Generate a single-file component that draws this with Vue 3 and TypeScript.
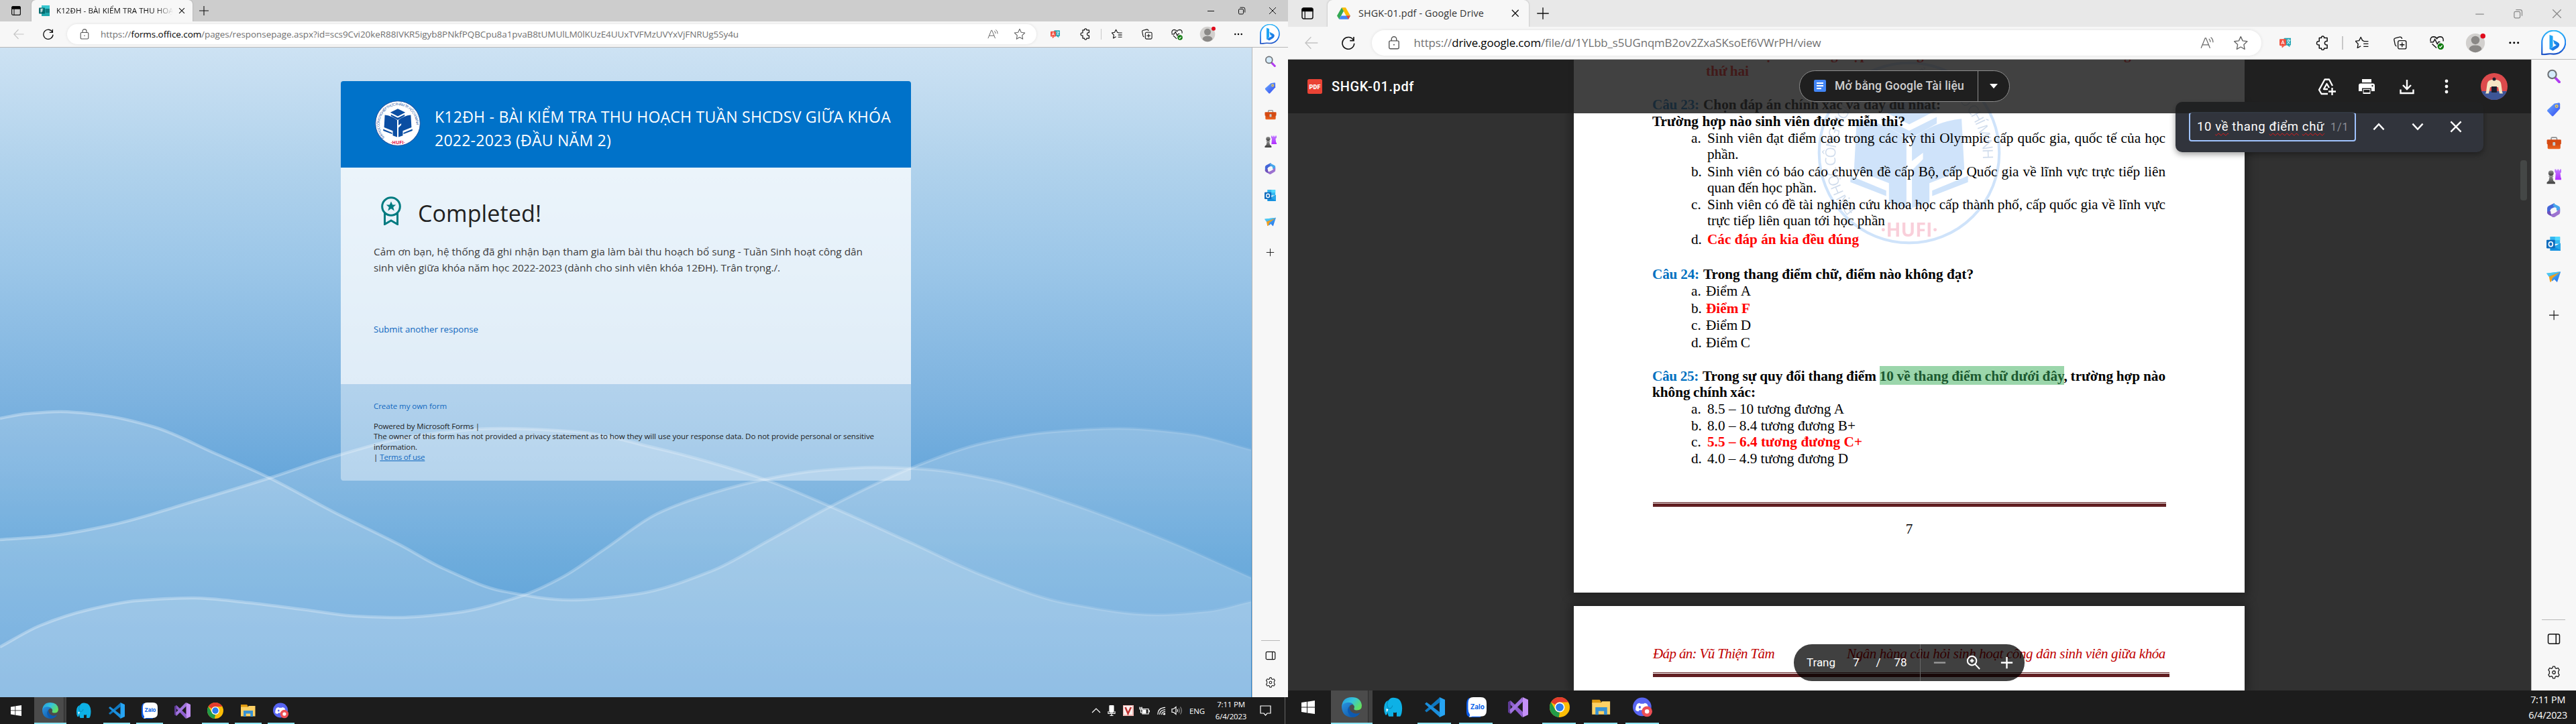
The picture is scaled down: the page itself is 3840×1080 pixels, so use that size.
<script setup lang="ts">
import type { Directive } from 'vue'

// Spreads a run of text over a given width in device pixels.
const spread = (el: HTMLElement, width: number, words: boolean) => {
  const zoom = (el as HTMLElement & { currentCSSZoom?: number }).currentCSSZoom ?? 1
  const text = el.textContent ?? ''
  const count = words ? (text.match(/ /g) ?? []).length : text.length
  if (!count || !width) return
  const gap = (width - el.getBoundingClientRect().width) / count / zoom
  if (words) el.style.wordSpacing = `${gap}px`
  else el.style.letterSpacing = `${gap}px`
}
const vFit: Directive<HTMLElement, number> = {
  mounted: (el, b) => spread(el, b.value, !!b.modifiers.words),
}

interface Win {
  id: 'forms' | 'drive'
  title: string
  titleWidth: number
  icon: string
  scheme: string
  host: string
  path: string
  urlWidth: number
}
const wins: Win[] = [
  {
    id: 'forms', title: 'K12ĐH - BÀI KIỂM TRA THU HOẠC', titleWidth: 182, icon: 'i-forms',
    scheme: 'https://', host: 'forms.office.com',
    path: '/pages/responsepage.aspx?id=scs9Cvi20keR88IVKR5igyb8PNkfPQBCpu8a1pvaB8tUMUlLM0lKUzE4UUxTVFMzUVYxVjFNRUg5Sy4u',
    urlWidth: 951,
  },
  {
    id: 'drive', title: 'SHGK-01.pdf - Google Drive', titleWidth: 187, icon: 'i-drive',
    scheme: 'https://', host: 'drive.google.com',
    path: '/file/d/1YLbb_s5UGnqmB2ov2ZxaSKsoEf6VWrPH/view', urlWidth: 607,
  },
]
const sideIcons = ['s-search', 's-tag', 's-box', 's-chess', 's-365', 's-outlook', 's-send']
const apps = [
  { icon: 't-edge', state: 'active' }, { icon: 't-mamp', state: '' }, { icon: 't-code', state: 'open' },
  { icon: 't-zalo', state: 'open' }, { icon: 't-vs', state: '' }, { icon: 't-chrome', state: 'open' },
  { icon: 't-files', state: 'open' }, { icon: 't-discord', state: 'open' },
]

// Smooth curve through the points that never overshoots a crest or a trough.
type Pt = [number, number]
const curve = (p: Pt[]): string => {
  const slope = (i: number) => (p[i + 1][1] - p[i][1]) / (p[i + 1][0] - p[i][0])
  const tan = p.map((_, i) => {
    if (i === 0) return slope(0)
    if (i === p.length - 1) return slope(i - 1)
    const a = slope(i - 1)
    const b = slope(i)
    return a * b <= 0 ? 0 : (2 * a * b) / (a + b)
  })
  let d = `M${p[0][0]} ${p[0][1]}`
  for (let i = 0; i < p.length - 1; i++) {
    const h = (p[i + 1][0] - p[i][0]) / 3
    d += `C${p[i][0] + h} ${p[i][1] + tan[i] * h} ${p[i + 1][0] - h} ${p[i + 1][1] - tan[i + 1] * h} ${p[i + 1][0]} ${p[i + 1][1]}`
  }
  return d
}
const waves = [
  curve([[0, 624], [40, 617], [90, 614], [150, 619], [230, 637], [320, 676], [402, 713], [500, 765], [595, 812], [661, 848], [750, 882], [851, 895], [950, 886], [1060, 852], [1150, 804], [1239, 755], [1359, 698], [1470, 660], [1570, 644], [1668, 639], [1770, 647], [1866, 671]]),
  curve([[0, 805], [70, 800], [171, 782], [285, 749], [402, 713], [508, 678], [620, 650], [747, 639], [860, 644], [980, 669], [1060, 690], [1145, 717], [1239, 756], [1359, 810], [1469, 860], [1590, 900], [1724, 917], [1800, 912], [1866, 897]]),
  curve([[0, 965], [60, 933], [130, 910], [205, 896], [288, 892], [370, 899], [465, 911], [530, 919], [594, 921], [680, 914], [777, 889], [840, 860], [900, 820], [980, 766], [1060, 736], [1145, 714], [1220, 702], [1304, 697], [1380, 700], [1480, 716], [1592, 750], [1739, 806], [1866, 862]]),
]

interface Row { h: number; mark?: string; head?: string; text: string; w: number; red?: boolean; bold?: boolean; near?: boolean; flat?: boolean }
const before: Row[] = [
  { h: 50, mark: ' ', text: 'thứ hai', w: 64, red: true, near: true },
  { h: 25, head: 'Câu 23:', text: 'Chọn đáp án chính xác và đầy đủ nhất:', w: 354, bold: true },
  { h: 25, text: 'Trường hợp nào sinh viên được miễn thi?', w: 377, bold: true, flat: true },
  { h: 24.5, mark: 'a.', text: 'Sinh viên đạt điểm cao trong các kỳ thi Olympic cấp quốc gia, quốc tế của học', w: 683 },
  { h: 25.5, mark: ' ', text: 'phần.', w: 0 },
  { h: 24.5, mark: 'b.', text: 'Sinh viên có báo cáo chuyên đề cấp Bộ, cấp Quốc gia về lĩnh vực trực tiếp liên', w: 683 },
  { h: 25, mark: ' ', text: 'quan đến học phần.', w: 163 },
  { h: 24, mark: 'c.', text: 'Sinh viên có đề tài nghiên cứu khoa học cấp thành phố, cấp quốc gia về lĩnh vực', w: 683 },
  { h: 28, mark: ' ', text: 'trực tiếp liên quan tới học phần', w: 265 },
  { h: 52, mark: 'd.', text: 'Các đáp án kia đều đúng', w: 226, red: true },
  { h: 25, head: 'Câu 24:', text: 'Trong thang điểm chữ, điểm nào không đạt?', w: 403, bold: true },
  { h: 26, mark: 'a.', text: 'Điểm A', w: 67, near: true },
  { h: 25, mark: 'b.', text: 'Điểm F', w: 66, red: true, near: true },
  { h: 26, mark: 'c.', text: 'Điểm D', w: 67, near: true },
  { h: 50, mark: 'd.', text: 'Điểm C', w: 66, near: true },
]
const after: Row[] = [
  { h: 25, text: 'không chính xác:', w: 154, bold: true, flat: true },
  { h: 24.5, mark: 'a.', text: '8.5 – 10 tương đương A', w: 204 },
  { h: 24.5, mark: 'b.', text: '8.0 – 8.4 tương đương B+', w: 221 },
  { h: 24.5, mark: 'c.', text: '5.5 – 6.4 tương đương C+', w: 231, red: true },
  { h: 24, mark: 'd.', text: '4.0 – 4.9 tương đương D', w: 210 },
]
</script>

<template>
  <div class="desk">
    <svg class="defs" width="0" height="0" aria-hidden="true">
      <defs>
        <linearGradient id="g-bing" x1="0" y1="0" x2="0" y2="1"><stop offset="0" stop-color="#2fb6f7" /><stop offset=".6" stop-color="#1b7df0" /><stop offset="1" stop-color="#1a4fc4" /></linearGradient>
        <linearGradient id="g-b" x1="0" y1="0" x2="1" y2="1"><stop offset="0" stop-color="#1ba8f5" /><stop offset="1" stop-color="#1c62dc" /></linearGradient>
        <linearGradient id="g-tag" x1="0" y1="0" x2="1" y2="1"><stop offset="0" stop-color="#6cb0ff" /><stop offset="1" stop-color="#3448f0" /></linearGradient>
        <linearGradient id="g-box" x1="0" y1="0" x2="0" y2="1"><stop offset="0" stop-color="#c8400f" /><stop offset="1" stop-color="#ee6620" /></linearGradient>
        <linearGradient id="g-pawn" x1="0" y1="0" x2="0" y2="1"><stop offset="0" stop-color="#969696" /><stop offset="1" stop-color="#3c3c3c" /></linearGradient>
        <linearGradient id="g-rook" x1="0" y1="0" x2="0" y2="1"><stop offset="0" stop-color="#c07cff" /><stop offset="1" stop-color="#b02cff" /></linearGradient>
        <linearGradient id="g-edge" x1="0" y1="0" x2="1" y2=".6"><stop offset="0" stop-color="#2196e0" /><stop offset=".5" stop-color="#35c4dc" /><stop offset="1" stop-color="#62e060" /></linearGradient>
        <linearGradient id="g-edge2" x1="0" y1="0" x2="1" y2="1"><stop offset="0" stop-color="#2a93e0" /><stop offset="1" stop-color="#0a4c9c" /></linearGradient>
        <linearGradient id="g-send" x1="0" y1="0" x2="1" y2="1"><stop offset="0" stop-color="#5bd0f8" /><stop offset="1" stop-color="#1c66e8" /></linearGradient>
      </defs>

      <symbol id="i-work" viewBox="0 0 16 16"><rect x="1.6" y="1.6" width="12.8" height="12.8" rx="2" fill="none" stroke="#111" stroke-width="1.2" /><path d="M1.6 5.2V3.4Q1.6 1.6 3.4 1.6H12.6Q14.4 1.6 14.4 3.4V5.2ZM5 5v9.4" stroke="#111" stroke-width="1" /></symbol>
      <symbol id="i-forms" viewBox="0 0 16 16"><rect x="4" width="12" height="16" rx="1" fill="#1a9ba1" /><path d="M4 0h11a1 1 0 0 1 1 1v4H4z" fill="#37c6d0" /><path d="M10 5h6v6h-6z" fill="#0f7c82" /><path d="M10 11h6v4a1 1 0 0 1-1 1H4v-4z" fill="#1fa7ad" /><rect y="3.5" width="9" height="9" rx="1" fill="#036c70" /><path d="M3.2 10.6V5.6H6.2M3.2 8.1h2.6" stroke="#fff" stroke-width="1.2" fill="none" /></symbol>
      <symbol id="i-drive" viewBox="0 0 16 16"><path d="M5.6 1h4.8L16 10.8h-5z" fill="#fbbc04" /><path d="M5.6 1 8 5.2 2.6 15 0 10.8z" fill="#34a853" /><path d="M5 10.8h11L13.6 15H2.6z" fill="#4285f4" /><path d="M11 10.8h5L13.6 15z" fill="#ea4335" /></symbol>
      <symbol id="i-x" viewBox="0 0 16 16"><path d="m3.5 3.5 9 9m0-9-9 9" stroke="currentColor" stroke-width="1.2" /></symbol>
      <symbol id="i-plus" viewBox="0 0 16 16"><path d="M8 1v14M1 8h14" stroke="currentColor" stroke-width="1.1" /></symbol>
      <symbol id="i-min" viewBox="0 0 12 12"><path d="M1 6.5h10" stroke="currentColor" stroke-width="1" /></symbol>
      <symbol id="i-restore" viewBox="0 0 12 12" fill="none" stroke="currentColor"><rect x="1.5" y="3.5" width="7" height="7.5" rx="1.4" /><path d="M3.5 1.2H8.6Q10.8 1.2 10.8 3.4V8.6" /></symbol>
      <symbol id="i-close" viewBox="0 0 12 12"><path d="m1 1 10 10m0-10L1 11" stroke="currentColor" /></symbol>
      <symbol id="i-back" viewBox="0 0 16 16" fill="none"><path d="M15.5 8H1m6.5-7L.8 8l6.700 7" stroke="#c4c4c4" stroke-width="1.1" /></symbol>
      <symbol id="i-reload" viewBox="0 0 16 16" fill="none"><path d="M14.200 5A7.100 7.100 0 1 0 15 8.600M14.400.8v4.500h-4.600" stroke="#111" stroke-width="1.300" /></symbol>
      <symbol id="i-lock" viewBox="0 0 16 16" fill="none" stroke="#555" stroke-width="1.100"><rect x="2.200" y="5.500" width="11.600" height="9.500" rx="1.600" /><path d="M5 5.500V3.600a3 3 0 0 1 6 0v1.900" /><circle cx="8" cy="10.200" r=".8" fill="#555" stroke="none" /></symbol>
      <symbol id="i-read" viewBox="0 0 18 18" fill="none" stroke="#666" stroke-width="1.100"><path d="M1 16 6.500 2.500h1L13 16M3 11.500h8M11.500 3.500q2 1.600 1.900 4.400M14 1.500q3.200 2.400 3 6.800" /></symbol>
      <symbol id="i-star" viewBox="0 0 18 18" fill="none" stroke="#666" stroke-width="1.100" stroke-linejoin="round"><path d="m9 1.300 2.300 5 5.400.7-4 3.800 1 5.500L9 13.600l-4.700 2.700 1-5.500-4-3.800 5.400-.7z" /></symbol>
      <symbol id="i-trans" viewBox="0 0 16 16"><rect x="6" y="1.500" width="10" height="10" rx="1" fill="#27a6b4" /><path d="M10 11h4v3z" fill="#27a6b4" /><rect y="3" width="9" height="9" rx="1" fill="#f2513f" /><path d="M3 12h4l-3.500 3z" fill="#f2513f" /><path d="M2.500 10 4.500 5l2 5M3.200 8.500h2.600M10 4.500h5M12.500 3.200v1.300M10.200 9.500q3.300-1.600 3.800-5M10.800 5.500q1 2.800 3.600 4" stroke="#fff" stroke-width=".9" fill="none" /></symbol>
      <symbol id="i-puzzle" viewBox="0 0 18 18" fill="none" stroke="#111" stroke-width="1.200" stroke-linejoin="round"><path d="M5 2.800h2.700q-.4-2 1.500-2t1.600 2h3.700V6.700h-1.300q-1.700.4-1.700 2.200t1.700 2.200h1.300v4h-3.600q0 2.100-1.700 2.100t-1.600-2.100H5v-4q-3 .4-3-2t3-2.200z" /></symbol>
      <symbol id="i-favs" viewBox="0 0 18 18" fill="none" stroke="#111" stroke-width="1.200" stroke-linejoin="round"><path d="M11.500 6.300 9.700 6 7.400 1.300 5.100 6l-4.800.7 3.500 3.600-.9 5.400 4.500-2.400" /><path d="M11 6.800h6.500M11 10.300h6.500M11 13.800h6.500" /></symbol>
      <symbol id="i-coll" viewBox="0 0 18 18" fill="none" stroke="#111" stroke-width="1.200"><rect x="6" y="6" width="11" height="11" rx="2" /><path d="M4 13.500Q2.400 13 2 11L.8 5Q.4 3 2.400 2.500L8.500 1q2.200-.3 2.900 2.500M11.500 8.300v6.400M8.300 11.500h6.400" /></symbol>
      <symbol id="i-heart" viewBox="0 0 18 18" fill="none" stroke="#111" stroke-width="1.200"><path d="M1 7.200Q.3 1.700 4.700 1.500 7.700 1.500 9 4q1.300-2.500 4.300-2.500Q17.700 1.700 17 7.200M.5 8.300h4l2-3.600 3 6 1.600-2.700h2M3 10.500l5.500 5.200" /><circle cx="13.800" cy="13.800" r="4" fill="#0f7b0f" stroke="none" /><path d="m12 13.900 1.300 1.300 2.400-2.700" stroke="#fff" /></symbol>
      <symbol id="i-user" viewBox="0 0 24 24"><circle cx="12" cy="12" r="11.300" fill="#d2d0ce" /><circle cx="12" cy="8.700" r="5" fill="#8a8886" /><path d="M4.500 19.500Q5 14.800 12 14.800t7.500 4.700A11.300 11.300 0 0 1 12 23.300a11.300 11.300 0 0 1-7.500-3.800" fill="#8a8886" /><circle cx="21" cy="3.800" r="3" fill="#e00b1c" /></symbol>
      <symbol id="i-dots" viewBox="0 0 16 16"><circle cx="2.600" cy="8" r="1.400" /><circle cx="8" cy="8" r="1.400" /><circle cx="13.400" cy="8" r="1.400" /></symbol>
      <symbol id="i-bing" viewBox="0 0 30 30"><path d="M1 29V15A14 14 0 1 1 15 28.500Q10 28 7.500 28.500T1 29Z" fill="#fdfeff" stroke="url(#g-bing)" stroke-width="1.700" stroke-linejoin="round" /><path d="m10 5.500 4 1.500v12.500l-4 3.200z" fill="#20a4f4" /><path d="m14.300 11.500 5.700 3q3 1.900 1 5-.8 1.200-2.200 2L14 24.500l-4-2.200 8.300-4.500-2.500-1.400z" fill="url(#g-b)" /></symbol>

      <symbol id="s-search" viewBox="0 0 20 20"><path d="m12.500 12.500 5.500 5.700" stroke="#b13cf0" stroke-width="3.600" stroke-linecap="round" /><circle cx="8" cy="7.500" r="5.800" fill="#d5ecfb" stroke="#6f7276" stroke-width="2" /></symbol>
      <symbol id="s-tag" viewBox="0 0 20 20"><path d="M11 1.500 17.500.3Q19 .3 19 2v6.500L9.800 18.700q-1.300 1.200-2.500 0L1.500 12.500q-1-1.200 0-2.400z" fill="url(#g-tag)" /><circle cx="14.300" cy="5.200" r="1.600" fill="#4a63d8" stroke="#f4cd4c" stroke-width="1.500" /></symbol>
      <symbol id="s-box" viewBox="0 0 20 20"><path d="M6 6V3.600Q6 2 7.500 2h5Q14 2 14 3.600V6" fill="none" stroke="#8e8e8e" stroke-width="1.500" /><rect x="1" y="9" width="18" height="9" rx="1.500" fill="url(#g-box)" /><rect y="5" width="20" height="6.500" rx="1.200" fill="#d54a12" /><rect x="8.200" y="8.500" width="3.600" height="5" rx=".8" fill="#c4cdd0" /></symbol>
      <symbol id="s-chess" viewBox="0 0 20 20"><circle cx="6" cy="5.600" r="3.500" fill="url(#g-pawn)" /><path d="M3 9h6v1.500H8l1 5 2.500 2.200V20H.5v-2.300L3 15.500l1-5H3z" fill="url(#g-pawn)" /><path d="M11 .5h2v1.600h1.400V.5h2v1.600h1.400V.5H20V4l-1.700 1.500.7 6 1 1v2h-8.500l.7-9L11 4z" fill="url(#g-rook)" /></symbol>
      <symbol id="s-365" viewBox="0 0 20 20"><path d="M11 0 3 4Q1 5.300 1 7v7l4 2.500V10L12 5.500z" fill="#4466d8" /><path d="m10 .5 7.500 4Q19 5.300 19 7v5l-5-2V7L9 4z" fill="#47a7ec" /><path d="M19 8v5.500q0 1.400-1.300 2.200L11 19.800q-1.400.6-2.600-.2L4 16.800q1.500.2 3-.7l7-4z" fill="#9c72d0" /><path d="m1 12 5-1v3q.6 2 2.500 2.200L5 17.500q-4-2-4-4z" fill="#6f52bd" /><path d="m10 6 4 2.300v4L10 14.500l-4-2.300V8.300z" fill="#f7f7f7" /></symbol>
      <symbol id="s-outlook" viewBox="0 0 20 20"><path d="M5 0h13q1 0 1 1v9H5z" fill="#35b8f1" /><path d="M12 0h7v5h-7z" fill="#50d9ff" /><path d="m5 10 7 3 8-4v10q0 1-1 1H6q-1 0-1-1z" fill="#1490df" /><path d="m11 14 9-5v10z" fill="#28a8ea" /><rect y="4.500" width="12" height="12" rx="1.200" fill="#0f6cbd" /><ellipse cx="6" cy="10.500" rx="2.800" ry="3.200" fill="none" stroke="#fff" stroke-width="1.600" /></symbol>
      <symbol id="s-send" viewBox="0 0 20 20"><path d="M0 4.500 20 2l-5 15-4-4-3 2.500z" fill="url(#g-send)" /><path d="M3.500 9 19 2.800 8.500 11l-2 5.500H5z" fill="#f0a020" /><path d="M0 4.500 20 2 4 8z" fill="#4cc8f0" /></symbol>
      <symbol id="s-panel" viewBox="0 0 16 16" fill="none" stroke="#111" stroke-width="1.200"><rect x="1.200" y="2.300" width="13.600" height="11.400" rx="1.800" /><path d="M10.600 2.300v11.400" /></symbol>
      <symbol id="s-gear" viewBox="0 0 18 18" fill="none" stroke="#222" stroke-width="1.200" stroke-linejoin="round"><path d="M7.200 3.100 7.700 1h2.600l.5 2.100 1.500.8 2.300-.8 1.700 2.700-1.300 1.700v3l1.300 1.700-1.700 2.700-2.300-.8-1.500.8-.5 2.100H7.700l-.5-2.100-1.500-.8-2.300.8-1.700-2.700L3 10.500v-3L1.700 5.800l1.700-2.700 2.300.8z" /><circle cx="9" cy="9" r="2" /></symbol>

      <symbol id="t-start" viewBox="0 0 16 16" fill="#fff"><path d="M0 2.400 6.400 1.400V7.500H0zM7.200 1.300 16 0V7.500H7.200zM0 8.300h6.400v6.200L0 13.600zM7.200 8.300H16V16l-8.800-1.300z" /></symbol>
      <symbol id="t-edge" viewBox="0 0 24 24"><path d="M0 11.500Q1 0 12 0t12 10q0 5.500-6 5.600-4.500-.2-3-2.800.8-1.600-.6-3.300Q12.500 7.600 8 7.500 2.500 7.700 0 11.500" fill="url(#g-edge)" /><path d="M0 12q.3-5 6.500-5.700Q12 6 14.200 9 9.500 8.200 9 12.500q0 6.500 7 7.500 3 .3 6-1.500Q18.500 24 12 24 1 23.500 0 12" fill="url(#g-edge2)" /><path d="M9 11q-3.500 4-.5 9 2 3.500 6 3.700Q19 23 22 18.500 18 20.500 14 19q-5-2.500-5-8" fill="#0d5ab0" /></symbol>
      <symbol id="t-mamp" viewBox="0 0 24 24"><path d="M1 12Q1.500 5 6 4q3-4.500 8-3.200Q22 1.500 22.500 13q0 7-2.300 10H16v-5q-2 1-4 .2V23H6.500q-1.500-3-1-6-1 5.500-3 4Q.7 18 1 12" fill="#0db1e6" /><path d="M6 4q-3 5 0 9 4 1.500 5-3" fill="none" stroke="#0689b8" stroke-width=".9" /><path d="M3.500 13.500 6 14.500 4 18" fill="#fff" /></symbol>
      <symbol id="t-code" viewBox="0 0 24 24"><path d="M17.500 0 24 3v18l-6.500 3z" fill="#27a4f2" /><path d="m0 16 2 2L18 6V0z" fill="#0f78c0" /><path d="M0 8l2-2 16 12v6z" fill="#1b8fdd" /></symbol>
      <symbol id="t-zalo" viewBox="0 0 24 24"><path d="M6 1H3Q0 3 0 8v10q0 6 6 6h11z" fill="#0a5be8" /><path d="M8 0h9q7 0 7 7v9q0 7-7 7H7q-2 1-4 .5 1.500-1.500 1-3Q2 18 2 14V7q0-7 6-7" fill="#fff" /><text x="13" y="14.300" text-anchor="middle" font-family="Inter, sans-serif" font-size="8" font-weight="700" fill="#0b63e8" textLength="17">Zalo</text></symbol>
      <symbol id="t-vs" viewBox="0 0 24 24"><path d="m0 6 3-2 15 14-1 6z" fill="#8f5fd0" /><path d="M0 6l3-2v16l-3-2z" fill="#5e3b95" /><path d="m3 20 15-15-1-5L2 15z" fill="#a074de" /><path d="M17.500 0 24 3v18l-6.500 3z" fill="#c490f7" /></symbol>
      <symbol id="t-chrome" viewBox="0 0 24 24"><circle cx="12" cy="12" r="12" fill="#fbbd06" /><path d="M1.600 6A12 12 0 0 1 22.400 6H12a6 6 0 0 0-5.200 3z" fill="#e33b2e" /><path d="M1.600 6 6.800 15A6 6 0 0 0 12 18l-1 6A12 12 0 0 1 1.600 6" fill="#229a48" /><path d="m17.200 15-5.200 9h-1l3.400-6.600z" fill="#fbbd06" /><circle cx="12" cy="12" r="6" fill="#fff" /><circle cx="12" cy="12" r="4.700" fill="#2b7bec" /></symbol>
      <symbol id="t-files" viewBox="0 0 24 24"><path d="M1 3h9l1.500 2v3H1z" fill="#e09a10" /><path d="M1 6.500h10.500L13 5h9.500v15.500H1z" fill="#fdd165" /><path d="M5 21v-9h14v9h-3.700v-4.500H8.700V21z" fill="#3792d4" /></symbol>
      <symbol id="t-discord" viewBox="0 0 26 25"><circle cx="12" cy="12" r="12" fill="#5865f2" /><path d="M8.500 7 10 8h4l1.500-1q2.500.5 3.300 1.800 2 4 1.700 7.400-2 1.500-3.700 1.800l-1.300-1.800h-7L7.200 18q-1.700-.3-3.700-1.800-.3-3.400 1.700-7.400Q6 7.500 8.500 7" fill="#fff" /><ellipse cx="9" cy="12.500" rx="1.400" ry="1.700" fill="#5865f2" /><circle cx="18.300" cy="18" r="6.800" fill="#ed4f55" /><circle cx="18.300" cy="18" r="2.800" fill="#fff" /></symbol>

      <symbol id="hufi" viewBox="-100 -100 200 200">
        <circle r="98" class="seal-bg" /><circle r="98" fill="none" class="seal-ring" stroke-width="3" />
        <path id="ring" d="M-58 62A85 85 0 0 1-62-48 78 78 0 0 1 62-48 85 85 0 0 1 58 62" fill="none" />
        <text font-family="Open Sans, sans-serif" font-size="15.500" fill="#1c55a4"><textPath href="#ring" textLength="322">ĐẠI HỌC CÔNG NGHIỆP THỰC PHẨM TP. HỒ CHÍ MINH</textPath></text>
        <g class="seal-ink"><path d="m0-64 33 16L0-31l-33-17z" /><path d="M-30-39 0-24l30-15v7L0-15l-30-17z" /><path d="M-57-37q30 3 54 22V60l-19-6V33l-38-15zM57-37Q27-34 3-15v24l12-9v7L3 19v41l19-6V33l38-15z" /><path d="m-64 25 39 16v6L-64 32zM64 25 25 41v6l39-15z" /></g>
        <text y="91" text-anchor="middle" font-family="Open Sans, sans-serif" font-size="21" font-weight="700" fill="#e3174a">·HUFI·</text>
      </symbol>
    </svg>

    <section v-for="w in wins" :key="w.id" class="monitor" :class="w.id">
      <header class="titlebar zoomed">
        <div class="work"><svg><use href="#i-work" /></svg></div>
        <div class="tab">
          <svg class="fav"><use :href="'#' + w.icon" /></svg>
          <div class="tabname"><span v-fit="w.titleWidth">{{ w.title }}</span></div>
          <svg class="tabx"><use href="#i-x" /></svg>
        </div>
        <svg class="newtab"><use href="#i-plus" /></svg>
        <div class="winbtns"><svg><use href="#i-min" /></svg><svg><use href="#i-restore" /></svg><svg><use href="#i-close" /></svg></div>
      </header>
      <nav class="toolbar zoomed">
        <span class="cell nav"><svg class="s16"><use href="#i-back" /></svg></span>
        <span class="cell nav"><svg class="s16"><use href="#i-reload" /></svg></span>
        <div class="omni">
          <svg class="s16 lock"><use href="#i-lock" /></svg>
          <span v-fit="w.urlWidth" class="url">{{ w.scheme }}<b>{{ w.host }}</b>{{ w.path }}</span>
          <svg class="s16 read"><use href="#i-read" /></svg>
          <svg class="s18"><use href="#i-star" /></svg>
        </div>
        <div class="tools">
          <span class="cell c44"><svg class="s14"><use href="#i-trans" /></svg></span>
          <span class="cell c46"><svg class="s18"><use href="#i-puzzle" /></svg></span>
          <i class="sep"></i>
          <span class="cell c46"><svg class="s16"><use href="#i-favs" /></svg></span>
          <span class="cell c44"><svg class="s16"><use href="#i-coll" /></svg></span>
          <span class="cell c44"><svg class="s17"><use href="#i-heart" /></svg></span>
          <span class="cell c48"><svg class="s24"><use href="#i-user" /></svg></span>
          <span class="cell c44"><svg class="s14"><use href="#i-dots" /></svg></span>
          <span class="cell c50"><svg class="s30"><use href="#i-bing" /></svg></span>
        </div>
      </nav>

      <div class="body">
        <main v-if="w.id === 'forms'" class="formpage">
          <svg class="waves" viewBox="0 71 1865 969" preserveAspectRatio="none">
            <defs><linearGradient id="wl" x1="0" x2="1865" y1="0" y2="0" gradientUnits="userSpaceOnUse"><stop offset="0" stop-color="#fff" stop-opacity=".3" /><stop offset=".7" stop-color="#fff" stop-opacity=".2" /><stop offset="1" stop-color="#fff" stop-opacity=".06" /></linearGradient></defs>
            <g fill="#fff" fill-opacity=".2"><path v-for="d in waves" :key="d" :d="d + 'V1040H0Z'" /></g>
            <g fill="none" stroke="url(#wl)" stroke-width="4.500"><path v-for="d in waves" :key="d" :d="d" /></g>
          </svg>
          <article class="card">
            <header class="cardhead">
              <svg class="logo"><use href="#hufi" /></svg>
              <h1><span v-fit="680">K12ĐH - BÀI KIỂM TRA THU HOẠCH TUẦN SHCDSV GIỮA KHÓA</span><br><span v-fit="263">2022-2023 (ĐẦU NĂM 2)</span></h1>
            </header>
            <div class="cardbody">
              <div class="done">
                <svg class="badge" viewBox="0 0 30 43"><g fill="none" stroke="#007b80" stroke-width="3"><circle cx="15" cy="15" r="13.300" /><path d="M5.500 25v16.500l9.500-5.500 9.500 5.500V25" /></g><path d="m15 7.500 2.200 5h5l-4 3.500 1.500 5.500L15 18.300l-4.700 3.200 1.500-5.500-4-3.500h5z" fill="#007b80" /></svg>
                <span v-fit="184" class="big">Completed!</span>
              </div>
              <p class="msg"><span v-fit="729">Cảm ơn bạn, hệ thống đã ghi nhận bạn tham gia làm bài thu hoạch bổ sung - Tuần Sinh hoạt công dân</span><br><span v-fit="606">sinh viên giữa khóa năm học 2022-2023 (dành cho sinh viên khóa 12ĐH). Trân trọng./.</span></p>
              <a class="again"><span v-fit="156">Submit another response</span></a>
            </div>
            <footer class="cardfoot">
              <a class="own"><span v-fit="109">Create my own form</span></a>
              <div class="legal"><span v-fit="158">Powered by Microsoft Forms |</span><br><span v-fit="746">The owner of this form has not provided a privacy statement as to how they will use your response data. Do not provide personal or sensitive</span><br><span v-fit="65">information.</span><br>| <a v-fit="67" class="terms">Terms of use</a></div>
            </footer>
          </article>
        </main>

        <main v-else class="viewer">
          <div class="sheet first">
            <svg class="watermark"><use href="#hufi" /></svg>
            <div class="rows">
              <div class="cut"><b>ạ</b><b>g</b><b>ợp</b><b>g</b><b>g</b></div>
              <div v-for="(r, i) in before" :key="i" class="row" :style="{ height: r.h + 'px' }">
                <b v-if="r.head" class="qno"><span v-fit="70">{{ r.head }}</span></b>
                <span v-if="r.mark" class="mk" :class="{ near: r.near }">{{ r.mark }}</span>
                <span v-fit.words="r.w" :class="{ red: r.red, bold: r.bold, flat: r.flat }">{{ r.text }}</span>
              </div>
              <div class="row q25"><b class="qno"><span v-fit="69">Câu 25:</span></b><span v-fit.words="690" class="bold">Trong sự quy đổi thang điểm <mark>10 về thang điểm chữ dưới đây</mark>, trường hợp nào</span></div>
              <div v-for="(r, i) in after" :key="'z' + i" class="row" :style="{ height: r.h + 'px' }">
                <span v-if="r.mark" class="mk">{{ r.mark }}</span>
                <span v-fit.words="r.w" :class="{ red: r.red, bold: r.bold, flat: r.flat }">{{ r.text }}</span>
              </div>
            </div>
            <i class="rule end"></i>
            <div class="pageno">7</div>
          </div>
          <div class="sheet second">
            <div class="runhead"><span v-fit="181">Đáp án: Vũ Thiện Tâm</span><span v-fit="475">Ngân hàng câu hỏi sinh hoạt công dân sinh viên giữa khóa</span></div>
            <i class="rule wide"></i>
          </div>

          <div class="find">
            <div class="findbox"><span class="query"><span v-fit="190">10 <u>về</u> thang <u>điểm</u> <u>chữ</u></span></span><span class="count">1/1</span></div>
            <svg viewBox="0 0 24 24"><path d="m5 16 7-7.500 7 7.500" /></svg>
            <svg viewBox="0 0 24 24"><path d="m5 8 7 7.500L19 8" /></svg>
            <svg viewBox="0 0 24 24"><path d="m5 5 14 14m0-14L5 19" /></svg>
          </div>
          <header class="drivehead">
            <svg class="pdf" viewBox="0 0 22 22"><rect width="22" height="22" rx="2.500" fill="#ea4335" /><text x="11" y="14.500" text-anchor="middle" font-family="Roboto, sans-serif" font-size="9" font-weight="900" textLength="17" fill="#fff">PDF</text></svg>
            <span v-fit="123" class="fname">SHGK-01.pdf</span>
            <div class="openwith">
              <svg class="gdoc" viewBox="0 0 18 18"><rect width="18" height="18" rx="2" fill="#4285f4" /><path d="M4 5h10M4 9h10M4 13h7" stroke="#fff" stroke-width="1.800" /></svg>
              <span v-fit="193" class="owtext">Mở bằng Google Tài liệu</span>
              <span class="caret"><svg viewBox="0 0 12 7"><path d="M0 0h12L6 7z" fill="#fff" /></svg></span>
            </div>
            <div class="acts">
              <svg viewBox="0 0 28 28" fill="none" stroke="#fff" stroke-width="2.300" stroke-linejoin="round"><path d="M15 25H5.500L2 19 10.500 3.500h6.500L22 13" /><path d="m15 18H9l4.500-8 3.500 6" /><path d="M21.500 16v11M16 21.500h11" /></svg>
              <svg viewBox="0 0 28 28" fill="#fff"><path d="M7 3h14v5H7zM5 9.500h18q3 0 3 3V21h-5v-4.500H7V21H2v-8.500q0-3 3-3M8.500 18h11v7h-11z" /><path d="M9.500 19h9v4h-9z" fill="#212121" /><circle cx="22.500" cy="13" r="1.200" fill="#212121" /></svg>
              <svg viewBox="0 0 28 28" fill="none" stroke="#fff" stroke-width="2.400"><path d="M14 4v14M8 12l6 6 6-6M4.500 18.500V24h19v-5.500" /></svg>
              <svg viewBox="0 0 28 28" fill="#fff"><circle cx="14" cy="6" r="2.400" /><circle cx="14" cy="14" r="2.400" /><circle cx="14" cy="22" r="2.400" /></svg>
            </div>
            <svg class="sumo" viewBox="0 0 40 40"><circle cx="20" cy="20" r="20" fill="#dd4a4c" /><path d="M1.200 27h37.600A20 20 0 0 1 1.200 27" fill="#3d5596" /><path d="M13 11q3-1.500 7-1.500t7 1.500q3 1.500 3.500 6l1.500 11 1 2.500h-5L26 21H14l-2 9.500H7L8 28l1.500-11q.5-4.500 3.500-6" fill="#f6e6c4" /><circle cx="20" cy="9" r="2.500" fill="#202030" /><path d="M16 20h8v9h-8z" fill="#1a2030" /></svg>
          </header>
          <div class="pager">
            <span v-fit="43" class="lab">Trang</span><span class="p1">7</span><span class="p2">/</span><span class="p3">78</span><i></i>
            <svg viewBox="0 0 24 24"><path d="M3 12h18" stroke="#9a9a9a" stroke-width="2.500" /></svg>
            <svg viewBox="0 0 24 24" fill="none" stroke="#fff" stroke-width="2.200"><circle cx="10" cy="9" r="7" /><path d="m15 14.500 7 7.500M10 6v6M7 9h6" /></svg>
            <svg viewBox="0 0 24 24"><path d="M3 12h18M12 3v18" stroke="#fff" stroke-width="2.500" /></svg>
          </div>
          <div class="thumb"></div>
        </main>

        <aside class="side zoomed">
          <span v-for="s in sideIcons" :key="s" class="sc"><svg :class="s"><use :href="'#' + s" /></svg></span>
          <span class="sc add"><svg><use href="#i-plus" /></svg></span>
          <div class="sidefoot"><i></i><span class="sc"><svg><use href="#s-panel" /></svg></span><span class="sc"><svg><use href="#s-gear" /></svg></span></div>
        </aside>
      </div>

      <footer class="taskbar zoomed">
        <span class="start"><svg><use href="#t-start" /></svg></span>
        <span v-for="a in apps" :key="a.icon" class="app" :class="a.state"><svg><use :href="'#' + a.icon" /></svg></span>
        <div class="tray">
          <template v-if="w.id === 'forms'">
            <svg class="t1" viewBox="0 0 14 14"><path d="m1 10 6-6 6 6" /></svg>
            <svg class="t2" viewBox="0 0 12 16"><rect x="3" y="0" width="6" height="11" rx="1.500" fill="#fff" /><path d="M1 9v3.500h10V9M6 13v3M3.500 15.500h5" /></svg>
            <svg class="t3" viewBox="0 0 16 16"><rect width="16" height="16" fill="#f1b8b4" stroke="none" /><rect x="1" y="1" width="13" height="13" fill="#faf0ee" stroke="none" /><path d="m3.500 3 4 9.500L12 3" stroke="#c03030" stroke-width="2.500" /></svg>
            <svg class="t4" viewBox="0 0 16 14"><path d="M5 4.500h9V12H5zM14.500 7h1v2.500M1 1.500V5h3V1.500M.5 3h4.500M2.500 5v5H5" /><path d="M6 6h4v5H6z" fill="#fff" /></svg>
            <svg class="t5" viewBox="0 0 14 14"><path d="M1 13Q1 2 13 1.500M4 13Q4 5.500 13 5M7 13q.5-4.500 6-5M9.500 13q.5-2 3.500-2.500" /><circle cx="11.500" cy="12" r="1.500" fill="#fff" stroke="none" /></svg>
            <svg class="t6" viewBox="0 0 17 14"><path d="M1 4.500h2.500L7 1.500v11L3.500 9.500H1z" /><path d="M9 5q1.300 2 0 4" /><path d="M11 3.500q2.600 3.500 0 7M13.500 1.500q3.800 5.500 0 11" stroke="#888" /></svg>
            <span v-fit="23" class="eng">ENG</span>
          </template>
          <span class="clock"><span>7:11 PM</span><span>6/4/2023</span></span>
          <template v-if="w.id === 'forms'">
            <svg class="t7" viewBox="0 0 18 18"><path d="M1 2h15v11h-5l-2.500 3L6 13H1z" /></svg>
            <i></i>
          </template>
        </div>
      </footer>
    </section>
  </div>
</template>

<style>
body { margin: 0; overflow: hidden; }
</style>

<style scoped>
.desk { display: flex; width: 3840px; height: 1080px; font-family: "Open Sans", "Noto Sans", sans-serif; overflow: hidden; }
.defs { position: absolute; }
.monitor { width: 1920px; height: 1080px; display: flex; flex-direction: column; overflow: hidden; }
.drive .zoomed { zoom: 1.25; }
svg { flex: none; }

.titlebar { height: 32px; background: #cdcdcd; display: flex; align-items: center; flex: none; color: #111; }
.drive .titlebar { background: #e8e8e8; }
.work { width: 47px; display: flex; justify-content: center; }
.work svg { width: 16px; height: 16px; }
.tab { width: 240px; height: 32px; background: #f7f7f7; border-radius: 6px 6px 0 0; display: flex; align-items: center; box-shadow: 0 0 2px #0004; }
.fav { width: 16px; height: 16px; margin-left: 11px; }
.tabname { width: 174px; margin-left: 10px; overflow: hidden; white-space: nowrap; font-size: 11.500px; line-height: 30px; }
.forms .tabname { mask-image: linear-gradient(90deg, #000 148px, transparent 174px); }
.drive .tabname { color: #333; }
.tabx { width: 14px; height: 14px; margin-left: 6px; }
.newtab { width: 16px; height: 16px; margin-left: 9px; }
.winbtns { margin-left: auto; display: flex; }
.winbtns svg { width: 12px; height: 12px; margin: 0 17px; }
.drive .winbtns { color: #8a8a8a; }

.toolbar { height: 38px; padding-left: 6px; background: #f7f7f7; border-bottom: 1px solid #b8b8b8; display: flex; align-items: center; flex: none; position: relative; }
.cell { display: flex; justify-content: center; align-items: center; flex: none; }
.nav, .c44 { width: 44px; }
.c46 { width: 46px; }
.c48 { width: 48px; }
.c50 { width: 50px; }
.s14 { width: 14px; height: 14px; }
.s16 { width: 16px; height: 16px; }
.s17 { width: 17px; height: 17px; }
.s18 { width: 18px; height: 18px; }
.s24 { width: 24px; height: 24px; }
.s30 { width: 30px; height: 30px; }
.omni { flex: 1; height: 30px; margin-left: 6px; border-radius: 15px; background: #fff; display: flex; align-items: center; box-shadow: 0 0 4px #00000018; }
.lock { margin-left: 18px; }
.url { margin-left: 16px; font-size: 13.500px; color: #717171; white-space: nowrap; line-height: 30px; }
.url b { font-weight: 400; color: #000; }
.read { margin-left: auto; margin-right: 23px; }
.omni .s18 { margin-right: 16px; }
.tools { width: 369px; padding-left: 6px; display: flex; align-items: center; }
.sep { width: 1px; height: 16px; background: #c8c8c8; }

.body { flex: 1; min-height: 0; display: flex; }
.side { width: 54px; background: #f7f7f7; display: flex; flex-direction: column; flex: none; border-left: 1px solid #b8b8b8; box-sizing: border-box; }
.sc { height: 40px; display: flex; align-items: center; justify-content: center; flex: none; }
.sc svg { width: 17px; height: 17px; }
.sc .s-box { width: 18px; }
.sc .s-chess { width: 18px; height: 18px; }
.add { height: 50px; color: #111; }
.add svg { width: 13px; height: 13px; }
.sidefoot { margin-top: auto; padding-bottom: 2px; }
.sidefoot i { display: block; width: 28px; height: 1px; margin: 0 auto 2px; background: #b8b8b8; }
.sidefoot svg { width: 16px; height: 16px; }

.formpage { flex: 1; position: relative; background: linear-gradient(180deg, #cde2f3 0, #b0d2ec 179px, #9bc6e8 329px, #7cb2df 529px, #69a8db 629px, #4a98d4 762px, #2882ce 969px); }
.waves { position: absolute; width: 1865px; height: 969px; left: 0; top: 0; }
.card { position: relative; width: 850px; margin: 50px 0 0 508px; border-radius: 4px; overflow: hidden; white-space: nowrap; }
.cardhead { height: 129px; background: #0072c9; display: flex; color: #fff; }
.logo { width: 68px; height: 68px; margin: 29px 21px 0 51px; --seal: #fff; }
h1 { margin: 36px 0 0; font-size: 23px; line-height: 35px; font-weight: 400; }
.cardbody { height: 323px; background: rgba(255, 255, 255, .75); padding: 46px 0 0 49px; box-sizing: border-box; color: #3c3c3c; }
.done { display: flex; height: 44px; }
.badge { width: 30px; height: 43px; margin: -3px 25px 0 11px; }
.big { font-size: 34px; line-height: 44px; color: #212121; }
.msg { margin: 24px 0 0; font-size: 15.300px; line-height: 23.500px; }
.again { display: block; margin-top: 70px; font-size: 13.200px; line-height: 20px; color: #1068bf; }
.cardfoot { height: 144px; box-sizing: border-box; padding: 24.500px 0 0 49px; background: rgba(255, 255, 255, .4); font-size: 11.500px; color: #212121; }
.own { display: block; line-height: 16px; color: #1068bf; }
.legal { margin-top: 14px; line-height: 15.500px; }
.terms { color: #1068bf; text-decoration: underline; }

.seal-bg { fill: var(--seal, none); }
.seal-ink { fill: var(--ink, #0b4ea2); }
.seal-ring { stroke: var(--ink, #1c55a4); }

.viewer { flex: 1; min-width: 0; position: relative; background: #313131; overflow: hidden; }
.sheet { width: 1000px; margin-left: 426px; background: #fff; box-sizing: border-box; position: relative; overflow: hidden; font-family: "Liberation Serif", serif; color: #000; box-shadow: 0 0 14px 5px #00000050; }
.first { height: 795px; overflow: hidden; }
.second { height: 126px; margin-top: 20px; padding-top: 51px; }
.watermark { position: absolute; left: 363px; top: 2px; width: 274px; height: 274px; opacity: .2; --ink: #1478ea; }
.rows { position: relative; margin-top: -20px; padding-left: 117px; font-size: 21.240px; line-height: 24px; white-space: nowrap; }
.row { display: flex; align-items: flex-start; }
.cut { display: flex; height: 25px; color: #f00; }
.cut b { width: 32px; }
.cut b:first-child { margin-left: 168px; width: 98px; }
.cut b:nth-child(3) { width: 96px; }
.cut b:nth-child(4) { width: 309px; }
.qno { color: #0070c0; width: 76px; flex: none; }
.q25 .qno { width: 75px; }
.mk { width: 24px; margin-left: 58px; flex: none; }
.mk.near { width: 22px; }
.bold { font-weight: 700; }
.red { color: #f00; font-weight: 700; }
.q25 { height: 24px; }
mark { background: #9bd6ab; color: #1c5a30; padding: 3px 0 1px; }
.rule { display: block; box-sizing: border-box; width: 765px; margin-left: 118px; height: 7px; border-top: 1px solid #5f1f22; border-bottom: 5px solid #622023; }
.rule.end { margin-top: 53px; }
.rule.wide { width: 770px; margin-top: 18px; }
.pageno { text-align: center; font-size: 21.240px; line-height: 24px; margin-top: 21px; }
.runhead { margin: 0 118px; display: flex; justify-content: space-between; color: #c00000; font-style: italic; font-size: 21px; line-height: 30px; height: 30px; white-space: nowrap; }
.runhead span { margin-top: 5px; margin-bottom: -5px; }
.drivehead { position: absolute; left: 0; top: 0; right: 0; height: 80px; background: rgba(30, 30, 30, .845); display: flex; align-items: center; color: #fff; font-family: Roboto, sans-serif; }
.pdf { width: 22px; height: 22px; margin-left: 29px; }
.fname { margin-left: 14px; font-size: 20px; font-weight: 500; white-space: nowrap; }
.openwith { position: absolute; left: 762px; top: 16px; width: 314px; height: 47px; box-sizing: border-box; border: 1px solid #8e8e8e; border-radius: 24px; background: #1f1f1f; display: flex; align-items: center; white-space: nowrap; }
.gdoc { width: 18px; height: 18px; margin-left: 21px; }
.owtext { margin-left: 13px; font-size: 17.500px; color: #d0d0d0; font-weight: 500; }
.caret { margin-left: auto; width: 47px; height: 45px; display: flex; align-items: center; justify-content: center; border-left: 1px solid #8e8e8e; box-sizing: border-box; }
.caret svg { width: 12px; height: 7px; }
.acts { margin-left: auto; display: flex; gap: 31.500px; }
.acts svg { width: 28px; height: 28px; }
.sumo { width: 40px; height: 40px; margin: 0 35px 0 36.500px; }
.find { position: absolute; left: 1323px; top: 63px; width: 459px; height: 75px; border-radius: 10px; background: #31343c; box-shadow: 0 3px 10px #0006; display: flex; align-items: center; font-family: Roboto, sans-serif; color: #fff; }
.findbox { width: 249px; height: 44px; margin: 0 21px 0 20px; box-sizing: border-box; border: 2px solid #a0c3ff; border-radius: 4px; display: flex; align-items: center; flex: none; }
.query { width: 190px; margin-left: 10px; overflow: hidden; white-space: nowrap; font-size: 18.500px; line-height: 36px; }
.query u { text-decoration: underline wavy #e01818 1px; text-underline-offset: 3px; }
.count { margin-left: 9px; font-size: 16px; color: #8e9199; letter-spacing: 1px; }
.find svg { width: 26px; height: 26px; margin-right: 31.500px; fill: none; stroke: #fff; stroke-width: 2.200; }
.find svg:last-child { margin-right: 0; }
.pager { position: absolute; left: 754px; top: 872px; width: 344px; height: 55px; border-radius: 27px; background: rgba(0, 0, 0, .75); display: flex; align-items: center; color: #fff; font: 17px Roboto, sans-serif; }
.lab { margin-left: 19px; }
.p1 { width: 20px; text-align: center; margin-left: 21px; }
.p2 { width: 20px; text-align: center; margin-left: 13px; }
.p3 { width: 24px; text-align: center; margin-left: 11px; }
.pager i { width: 1px; height: 55px; margin-left: 17px; background: #666; }
.pager svg { width: 23px; height: 23px; margin-left: 17px; }
.pager svg + svg { margin-left: 27px; }
.thumb { position: absolute; left: 1837px; top: 150px; width: 10px; height: 60px; border-radius: 4px; background: #444746; }

.taskbar { height: 40px; background: #1c1c1c; display: flex; flex: none; color: #fff; position: relative; }
.start { width: 51px; display: flex; align-items: center; box-sizing: border-box; padding-left: 16px; }
.start svg { width: 16px; height: 16px; }
.app { width: 49px; display: flex; align-items: center; justify-content: center; position: relative; }
.drive .app { width: 49.600px; }
.app svg { width: 24px; height: 24px; }
.forms .app.active { width: 48px; margin-right: 1px; }
.app.active { background: linear-gradient(90deg, #4b4b4b 44px, #2c2c2c 44px, #2c2c2c 45px, #414141 45px); }
.app.active::after, .app.open::after { content: ""; position: absolute; left: 4.500px; bottom: 0; width: 40px; height: 2px; background: #8ce4f2; }
.app.active::after { left: 0; width: 100%; }
.tray { margin-left: auto; display: flex; align-items: center; }
.tray svg { fill: none; stroke: #fff; stroke-width: 1.200; }
.t1 { width: 14px; height: 14px; margin-right: 10px; }
.t2 { width: 12px; height: 16px; margin-right: 11px; }
.t3 { width: 16px; height: 16px; margin-right: 8px; }
.t4 { width: 16px; height: 14px; margin-right: 11px; }
.t5 { width: 13px; height: 13px; margin-right: 8px; }
.t6 { width: 17px; height: 14px; margin-right: 10px; }
.eng { font-size: 11.500px; }
.clock { width: 78px; display: flex; flex-direction: column; align-items: center; font-size: 11.500px; line-height: 18.500px; letter-spacing: -.2px; }
.drive .clock { width: 67px; }
.t7 { width: 18px; height: 18px; margin: 0 17px 0 4px; }
.tray i { width: 1px; height: 40px; background: #666; margin: 0 4px 0 2px; }
</style>
